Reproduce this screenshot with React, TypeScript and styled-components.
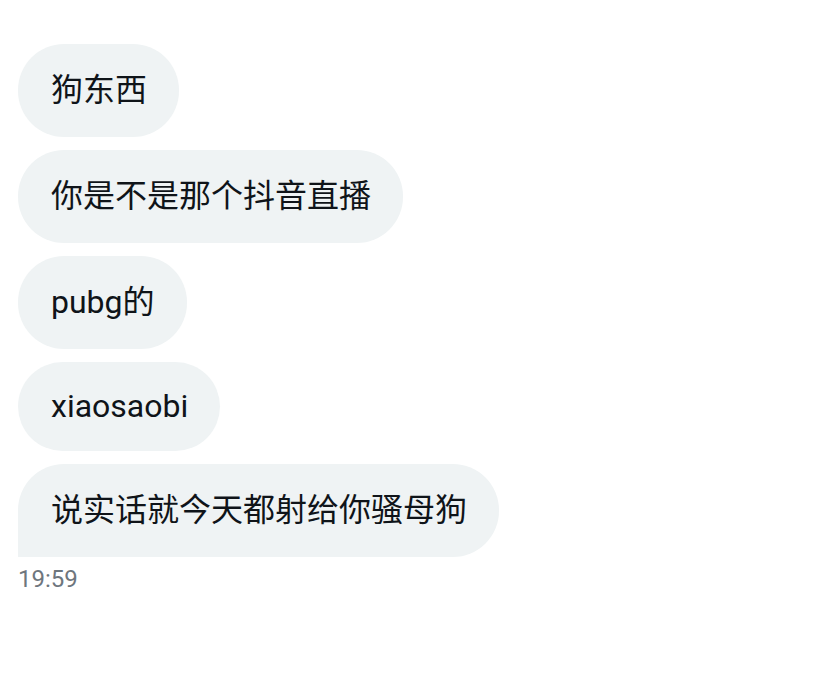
import React from 'react'
import styled, { createGlobalStyle } from 'styled-components'

const GlobalStyle = createGlobalStyle`
  html, body {
    margin: 0;
    padding: 0;
    background: #ffffff;
  }
`

const Thread = styled.div`
  display: flex;
  flex-direction: column;
  align-items: flex-start;
  gap: 13px;
  padding: 44px 18px 0;
  font-family: Roboto, 'Noto Sans CJK SC', sans-serif;
`

// latin-only lines come out a few px shorter in the original
const Bubble = styled.div<{ $last?: boolean; $latin?: boolean }>`
  background: #eff3f4;
  color: #0f1419;
  font-size: 32px;
  line-height: 41px;
  padding: ${(p) => (p.$latin ? '24px' : '26px')} 32px
    ${(p) => (p.$latin ? '24px' : '26px')} 33px;
  border-radius: ${(p) => (p.$last ? '46px 46px 46px 0' : '46px')};
  white-space: nowrap;
`

const Time = styled.div`
  margin-top: -5px;
  font-size: 24px;
  line-height: 28px;
  color: #6e767d;
`

const messages = [
  '狗东西',
  '你是不是那个抖音直播',
  'pubg的',
  'xiaosaobi',
  '说实话就今天都射给你骚母狗',
]

const App: React.FC = () => {
  return (
    <>
      <GlobalStyle />
      <Thread>
        {messages.map((text, i) => (
          <Bubble
            key={i}
            $last={i === messages.length - 1}
            $latin={/^[a-z]+$/i.test(text)}
          >
            {text}
          </Bubble>
        ))}
        <Time>19:59</Time>
      </Thread>
    </>
  )
}

export default App
